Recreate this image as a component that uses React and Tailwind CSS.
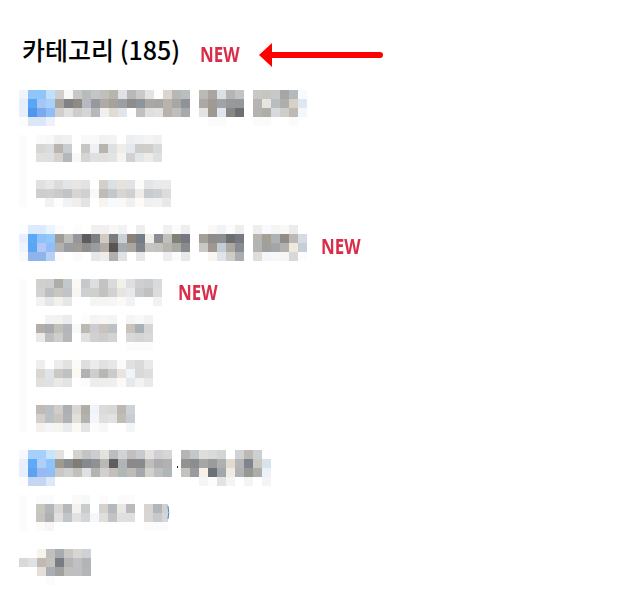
import React from 'react';

// each row is a list of cell colours, "." = empty. Cells are 9px square.
const Mosaic = ({ rows, className = '', children }) => {
  const cols = Math.max(...rows.map((r) => r.split(' ').length));
  return (
    <svg
      width={cols * 9}
      height={rows.length * 9}
      shapeRendering="crispEdges"
      className={`block shrink-0 ${className}`}
    >
      {rows.map((r, y) =>
        r.split(' ').map((c, x) =>
          c === '.' ? null : <rect key={`${x}-${y}`} x={x * 9} y={y * 9} width="9" height="9" fill={`#${c}`} />
        )
      )}
      {children}
    </svg>
  );
};

const New = ({ className = '' }) => (
  <span className={`block w-[40px] shrink-0 whitespace-nowrap text-[22px] leading-[24px] font-bold text-[#d92d4a] [font-family:'Open_Sans',sans-serif] [transform:scaleX(0.77)] origin-left blur-[0.4px] ${className}`}>
    NEW
  </span>
);

const head1 = [
  'f0f5fd 90c5fa 90c5fa bfdffb cfcfcf faf8f5 c8c8c8 b9bcbd c3c6c9 c2bfba b8b4af dfe3e7 b9b8b6 c8c9ca e3e3e2 fdfdfd d9d6d2 b9b7b3 b9bec0 . bdb9b5 a9a6a1 dce0e3 b3b5b6 c2c4c4 . c8c8c6 c8c5c1 c8c8c8 a8a6a2 b5b9be f8fafc',
  'e6eefc 5aa6f5 a3c8f8 a9d0fa a8a39d 808285 8f8a83 b5bac0 96999c afaaa5 a5a19b 9c9e9f 8d8d8d 8d959c aaa8a6 a8a6a3 b8b3ad a9a7a3 8f9296 . aba8a5 a09a93 a0a4a8 97999b 96999a . b5b5b3 e8e5e1 b9bdc2 aeaeac d8d0c6 dfe7f0',
  'e8effc 4f97ec 79a9ee 8fbdf5 d0cfcd e0e0df cfcdca d5d5d6 b7b8b9 f0f0ee e3dad2 dfe5ea fefefe c0c0be e0dfdd e3e2e0 b7b2ac bdbfbd a8a9a9 . e3e3e1 9f9891 e0e6f0 8a8683 6c7074 . b3b3b2 b0ada8 d5dadd cdcdca beb9b4 f3f7fa',
  'fafcfe dce6f7 dce6f7 ecf1fb . . . . . . . . . . . . . . . . . fbfbfb fbfbfb . . . fbfbfb fbfbfb . . fbfbfb .',
];
const sub1 = [
  'fbfaf9 f8f8f9 eeeeee eef0f1 . f9f9f9 f9f9f9 f1f1f0 f3f3f3 . eeeff0 f0f1f2 f5f4f3 f1f1f1',
  'd8d6d4 d9dbdc b7b4b1 c9cdcf . c8c6c2 eef0f1 b7b4ae dee0e1 f0ece8 e4e9ee cdcdcb cfcecc d8d9d9',
  'e0e0df dfdfde d6d3ce b3b7ba f9f8f6 d5d5d5 e0e0e0 e0e0df e2e3e3 f7f4f0 d0d2d1 e2e6e8 eeece9 dfe0e1',
];
const sub2 = [
  'e2e0df e6e7e8 dcdbd9 e2e4e6 e8e6e3 e1e2e3 . d3d0cc dce0e2 e6e2dd e0e2e3 fbfbf9 e4e5e6 eaeaea eaeaea',
  'cfcecd d0cfce cbcac9 c2c3c4 d8d6d3 cfd0d1 f9f9f8 bebcb7 c5c8ca d8d6d2 cfd0cf f1ece7 c7cbce ccd0d2 dcdcdb',
  '. f2f2f2 fdfdfd f2f2f2 f0efee e1e3e5 . f7f4f0 f7fafb f9f9f9 f0f0f0 fdfbf9 f0f0f0 f2f2f2 e7e8e9',
];

const head2 = [
  'fcfdff dbeafd dbeafd eaf4fe fcfcfc . fcfcfc . f0f0ef f1f0ee f8f7f5 f0f2f3 . eeeeee . . f0f0ef fbfbfb eeeeee . . f9f8f6 f0f2f5 fbfbfb eeeeee . eeeeee f8fafc f5f5f5 f8f8f7 ebebeb .',
  'e8eefb 5aa9f8 8dc3fa 93c8fc 9f9b96 bfbdb9 96979a 5c5c5e 7d8083 d2cbc4 7b7c7c c9d0d6 8a827a 747d86 f1eee7 8b8d90 c0c0bc 827e78 747880 . a59f99 8e8c88 8b8e92 6e6e6e 737a82 . b5b5b3 a69f96 aeb2b5 928c86 bbb9b6 d3dce6',
  'f0f4fc 5ca5f5 b3c8f6 92bdf6 b0b0ae 9b9c9d a09c97 8e8f8e 9a9da0 b2aba5 57554f a7abb1 aaa59e 80848a c5c5c2 c2c2bf b9b4ad a9a9a6 888a8c . c9c8c7 9e9890 c3ccd4 aba8a3 888b90 . b3b4b3 a0a09c a3a5a7 b0b0ae f0e8dc c6ced7',
  'f6f9fe 8eb4ee 8eb4ee b8d0f5 fcfcfc . fbfbfb . e7e7e7 f0ede8 aeb0b2 e0e3e6 . e8e8e8 . . eeeeee fbfbfb e8e8e8 . . f9f5f0 e0e4ea cfccc8 a9adb0 . e0dcd8 f5f6f8 f5f7f8 f5f6f5 d8d8d8 fbfcfd',
];
const s21 = [
  'd2d0cd cdcecf b0aca7 c3c8cb fbf9f5 c6c9cc dedede c5c3bf d8dadc f3efe9 dde0e3 cfcfcf cbccce d9dadb',
  'd3d2d0 bcbec0 c9c5c1 c0c4c7 f9f6f1 ccd0d3 cfcfce c2c2be cfd1d2 e8e4df e8e9ea c9cacb c0c1c2 dcdcdc',
  'f4f2f0 e5e6e7 f3f1ee e5e6e7 . . f5f5f4 f5f5f4 f6f6f5 fcfaf7 f2f2f2 . . f2f2f2',
];
const s22 = [
  '. f2f2f2 f2f2f1 ebebeb . fcfcfc f4f4f4 f6f6f6 f4f4f4 . f5f5f5 f8f8f8 f2f2f2',
  'b3aeaa a8aaad c1bfba b3b7ba f7f9f8 bcb9b2 ccccd2 c9c3bc bcc1c5 . c9c3bd a9b0b6 d5d5d5',
  'e9e9e9 bfbfc0 d0cdca b4b8bb . e2e0dc d0d0d3 cecdca d2d3d2 . d8d8d8 d4d4d4 d8d8d8',
  '. . . . . . . . . . fcfcfc fcfcfc fcfcfc',
];
const s23 = [
  'eeeeee . ececeb e2e2e2 fdfbf7 dcdee0 ebebeb e3e0e0 e5e6e8 fcfaf6 e0e0e0 dadada e8e9ea',
  'd9d6d3 e0e4e6 cbc9c6 bfc1c2 fcf9f3 b0b2b5 cfcecc b9b7b3 c9cbcd e9e4de eff4f8 d9d9d9 dededd',
  'dfdfde e0e1e2 ebe9e6 e2e3e5 . fbfbfb ededed eeeeed efefef fbfaf7 e8e8e8 f2f2f2 e8e9ea',
];
const s24 = [
  'c0bbb6 bac1c5 d1cdc8 acb0b3 d8d7d5 b2aea7 f0f5f9 dbdbdb d7d8d8 bcb8b1 ccd2d7',
  'd3cfca bcc1c4 c9c6c2 b0b3b5 e3dfda b2b2af f3f7fb dfdfdf e2e2e1 c1bdb6 c8cdd2',
  'f2f1f0 f5f5f5 f5f4f2 eaebec fbf9f5 e4e4e4 fcfcfc f7f7f7 . . f5f5f5',
];

const head3 = [
  'f7f8fe a5d0fb a5d0fb c8e3fc dfe2e0 fdfdfb d3d3d2 c4c4c2 cccdd1 e2e2df bcbcbe d0d3d2 c2bfbf c8c9cc e3e2e0 d0d0d2 d5d6d6 . b5b5b3 c2c7ca dfdedb dadadb d3d4d4 . d0d2d5 bdbab6 ccd0d3 .',
  'e8eefb 5eaaf8 afcff9 8dc4fb 9e9a92 8a8c90 807c74 868a8e 8d9295 b9b8b3 5e5e60 aeb5b4 8b898b 8a8a8c c1bdba adadaf b0b1b0 . 929291 8c8d8e a5a6a7 999b9c adb0b1 e3dacf b5b6b8 80848e cbc8c2 d9e3ec',
  'e8eefb 5ea1f1 98baf3 92bdf5 c9c8c6 d0d0ce c1c0bc dfe0e2 b3b3b2 d2cfcc c3c0bb b2b7b6 bebcb7 a5a7a8 d3d1cd bcbec0 b0b5b7 . c3c2bf 9a9b9d f8f0e6 6d7077 a2a7ab f0ebe3 b0b2b3 979796 adadab ecf0f9',
  'fbfcfe c5d6f3 c5d6f3 dfe8f9 . . . . . . . . . . . . . . . . f5f5f5 fdfcfa e3e3e3 f4f4f5 . f4f4f4 . f5f5f5 .',
];
const sub31 = [
  'fbfbfb fbfbfb . . fbfaf8 f7f9f8 . fbfbfb . fbfbfb fbfbfb . .',
  'c9c5c1 b3b7ba d9d6d4 b5b9bc f3f2f0 c9ccce . d5d2cd b4b9be e9e7e4 b8babe . d8d4d1 b3b6b9 d0d0d0',
  'c7c4bf adb1b3 e0dfdd c2c5c7 e2e2e2 d4d5d6 f5f7f8 dfdeda c0c3c6 e0e0e0 dedfdf . d8d5d2 c7c9cb d5d6d7',
  'fbfbf9 f7f6f5 . . . . . . . . . . fbfbfb fbfbfb fbfbfb',
];
const last = [
  '. . f7f3ed bfbfbe a9acaf c9c7c4 d8d6d3 ced2d7',
  'dcd8d5 dfe1e6 c3b8b4 c3c2be 7a7c85 b5b6b4 bfc0c4 b3b4b5',
  '. . e5ddd7 a9aeb2 a1a1a0 bfbfbf bfbfbf b4b5ba',
  '. . . fbfbfb . . . .',
];

export default function App() {
  return (
    <div className="w-[617px] h-[603px] bg-white pl-[19px] overflow-hidden [font-family:'Noto_Sans_CJK_KR',sans-serif]">
      {/* 제목 */}
      <div className="flex items-center h-[40px] mt-[31px] pl-[3px]">
        <h2 className="w-[157px] shrink-0 whitespace-nowrap text-[25px] leading-[40px] font-medium text-black mt-[-4px]">카테고리 (185)</h2>
        <New className="ml-[21px] mt-[3px]" />
        <svg width="126" height="26" viewBox="0 0 126 26" className="ml-[18px] mt-[8px] shrink-0">
          <path d="M1 13 L14 1 V10 H122 a3 3 0 0 1 0 6 H14 V25 Z" fill="#ff0000" />
        </svg>
      </div>

      <Mosaic rows={head1} className="mt-[19px]" />
      <div className="mt-[9px] pl-[9px] border-l-[8px] border-[#fbfbfb] w-fit">
        <Mosaic rows={sub1} />
        <Mosaic rows={sub2} className="mt-[18px]" />
      </div>

      <div className="flex items-center mt-[18px]">
        <Mosaic rows={head2} />
        <New className="ml-[14px] mt-[4px]" />
      </div>
      <div className="mt-[18px] pl-[9px] border-l-[8px] border-[#fbfbfb] w-fit">
        <div className="flex items-center">
          <Mosaic rows={s21} />
          <New className="ml-[16px] mt-[-3px]" />
        </div>
        <Mosaic rows={s22} className="mt-[9px]" />
        <Mosaic rows={s23} className="mt-[9px]" />
        <Mosaic rows={s24} className="mt-[18px]" />
      </div>

      <Mosaic rows={head3} className="mt-[18px]">
        <rect x="158" y="16" width="1" height="2" fill="#222222" />
      </Mosaic>
      <div className="mt-[9px] pl-[9px] border-l-[8px] border-[#fbfbfb] w-fit">
        <Mosaic rows={sub31}>
          <rect x="132" y="0" width="3" height="36" fill="#ffffff" />
          <path d="M132 11 q1.5 6.5 0 13" fill="none" stroke="#4a7fc8" strokeWidth="1" shapeRendering="auto" />
        </Mosaic>
      </div>
      <Mosaic rows={last} className="mt-[18px]" />
    </div>
  );
}
